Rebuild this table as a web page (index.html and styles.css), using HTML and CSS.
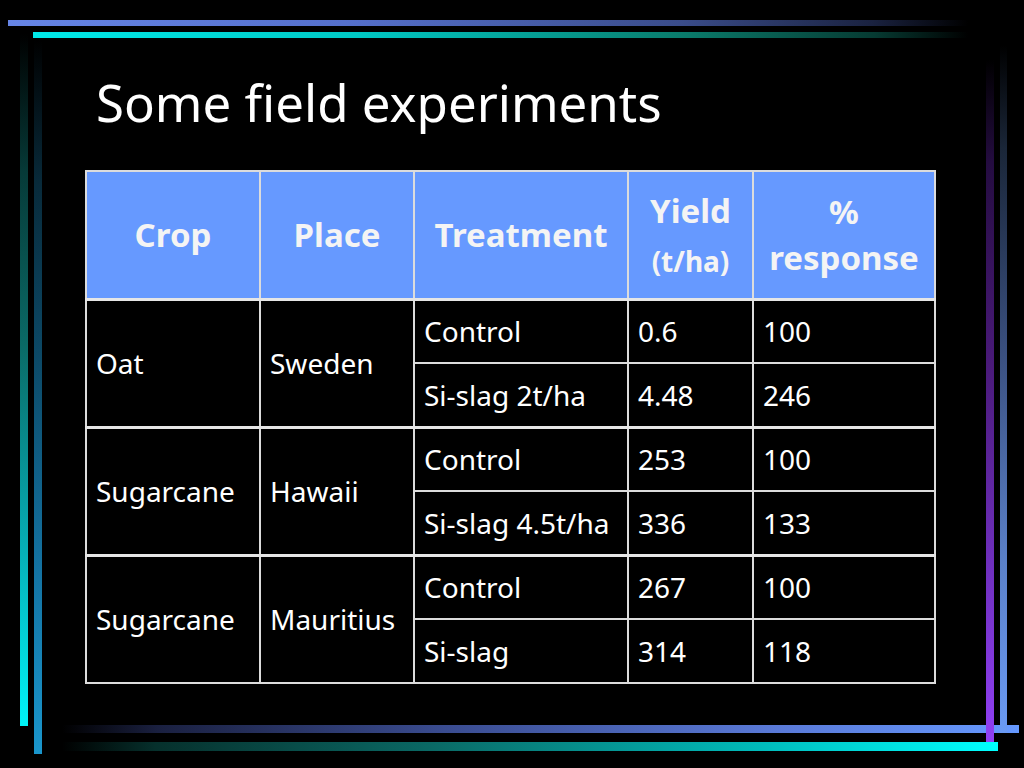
FILE: index.html
```html
<!DOCTYPE html>
<html lang="en">
<head>
<meta charset="utf-8">
<title>Some field experiments</title>
<link rel="stylesheet" href="styles.css">
</head>
<body>
<div class="slide">
  <div class="deco deco-top-blue"></div>
  <div class="deco deco-top-cyan"></div>
  <div class="deco deco-left-cyan"></div>
  <div class="deco deco-left-blue"></div>
  <div class="deco deco-bottom-blue"></div>
  <div class="deco deco-bottom-cyan"></div>
  <div class="deco deco-right-purple"></div>
  <div class="deco deco-right-blue"></div>

  <h1 class="title">Some field experiments</h1>

  <table class="data">
    <colgroup>
      <col class="c1"><col class="c2"><col class="c3"><col class="c4"><col class="c5">
    </colgroup>
    <thead>
      <tr>
        <th>Crop</th>
        <th>Place</th>
        <th>Treatment</th>
        <th class="yield">Yield<span class="unit">(t/ha)</span></th>
        <th>%<br>response</th>
      </tr>
    </thead>
    <tbody class="group">
      <tr>
        <td rowspan="2">Oat</td>
        <td rowspan="2">Sweden</td>
        <td>Control</td><td>0.6</td><td>100</td>
      </tr>
      <tr><td>Si-slag 2t/ha</td><td>4.48</td><td>246</td></tr>
    </tbody>
    <tbody class="group">
      <tr>
        <td rowspan="2">Sugarcane</td>
        <td rowspan="2">Hawaii</td>
        <td>Control</td><td>253</td><td>100</td>
      </tr>
      <tr><td>Si-slag 4.5t/ha</td><td>336</td><td>133</td></tr>
    </tbody>
    <tbody class="group">
      <tr>
        <td rowspan="2">Sugarcane</td>
        <td rowspan="2">Mauritius</td>
        <td>Control</td><td>267</td><td>100</td>
      </tr>
      <tr><td>Si-slag</td><td>314</td><td>118</td></tr>
    </tbody>
  </table>
</div>
</body>
</html>
```

FILE: styles.css
```css
html, body {
  margin: 0;
  padding: 0;
  background: #000;
}

body {
  width: 1024px;
  height: 768px;
  overflow: hidden;
  font-family: "Noto Sans", "Open Sans", sans-serif;
  color: #fff;
}

.slide {
  position: relative;
  width: 1024px;
  height: 768px;
  box-sizing: border-box;
  padding: 72px 0 0 85px;
}

.title {
  margin: 0 0 38px 11px;
  font-size: 51px;
  line-height: 60px;
  font-weight: 400;
  color: #fff;
}

/* table */
.data {
  border-collapse: collapse;
  table-layout: fixed;
  width: 849px;
  border: 2px solid #e6e6e6;
}

.c1 { width: 174px; }
.c2 { width: 154px; }
.c3 { width: 214px; }
.c4 { width: 125px; }
.c5 { width: 182px; }

.data th,
.data td {
  border: 2px solid #dcdcdc;
  padding: 0 0 0 9px;
}

.data th {
  background: #6699ff;
  color: #f4f4f4;
  font-weight: 700;
  font-size: 33px;
  line-height: 46px;
  text-align: center;
  padding: 0 4px;
  vertical-align: middle;
}

.data thead tr {
  height: 128px;
}

.data th.yield {
  vertical-align: top;
  padding-top: 16px;
}

.unit {
  display: block;
  font-size: 28px;
  line-height: 38px;
  margin-top: 8px;
}

.data td {
  font-size: 28px;
  line-height: 36px;
  height: 64px;
  box-sizing: border-box;
  vertical-align: middle;
  color: #fff;
}

.data tbody.group {
  border-top: 3px solid #e6e6e6;
}

/* decorative bars */
.deco {
  position: absolute;
}

.deco-top-blue {
  left: 8px;
  top: 20px;
  width: 960px;
  height: 6px;
  background: linear-gradient(to right, #6685e6 0%, #5570cc 35%, #3a4c8a 70%, #1a2240 90%, rgba(0,0,0,0) 100%);
}

.deco-top-cyan {
  left: 33px;
  top: 32px;
  width: 935px;
  height: 6px;
  background: linear-gradient(to right, #00eaea 0%, #00c8c4 35%, #0a7a6a 70%, #063a32 90%, rgba(0,0,0,0) 100%);
}

.deco-left-cyan {
  left: 20px;
  top: 34px;
  width: 8px;
  height: 692px;
  background: linear-gradient(to bottom, rgba(0,0,0,0) 0%, #063a38 20%, #0a6a66 45%, #06b0b8 75%, #00f4f8 100%);
}

.deco-left-blue {
  left: 34px;
  top: 40px;
  width: 8px;
  height: 714px;
  background: linear-gradient(to bottom, rgba(0,0,0,0) 0%, #082a3a 20%, #0c4a68 45%, #1474a4 75%, #1a96cc 100%);
}

.deco-bottom-blue {
  left: 62px;
  top: 725px;
  width: 957px;
  height: 8px;
  background: linear-gradient(to right, rgba(0,0,0,0) 0%, #1a2040 10%, #3a4c90 40%, #5a7ad8 75%, #6699ff 100%);
}

.deco-bottom-cyan {
  left: 62px;
  top: 742px;
  width: 936px;
  height: 9px;
  background: linear-gradient(to right, rgba(0,0,0,0) 0%, #06302c 10%, #0a6a66 40%, #00bcbc 75%, #00ffff 100%);
}

.deco-right-purple {
  left: 986px;
  top: 60px;
  width: 8px;
  height: 682px;
  background: linear-gradient(to bottom, rgba(0,0,0,0) 0%, #240c40 15%, #4a1a7a 45%, #7030c0 75%, #9040f4 100%);
}

.deco-right-blue {
  left: 1000px;
  top: 45px;
  width: 7px;
  height: 688px;
  background: linear-gradient(to bottom, rgba(0,0,0,0) 0%, #1a2638 15%, #3a5080 45%, #5a80c8 75%, #6a9af4 100%);
}
```
